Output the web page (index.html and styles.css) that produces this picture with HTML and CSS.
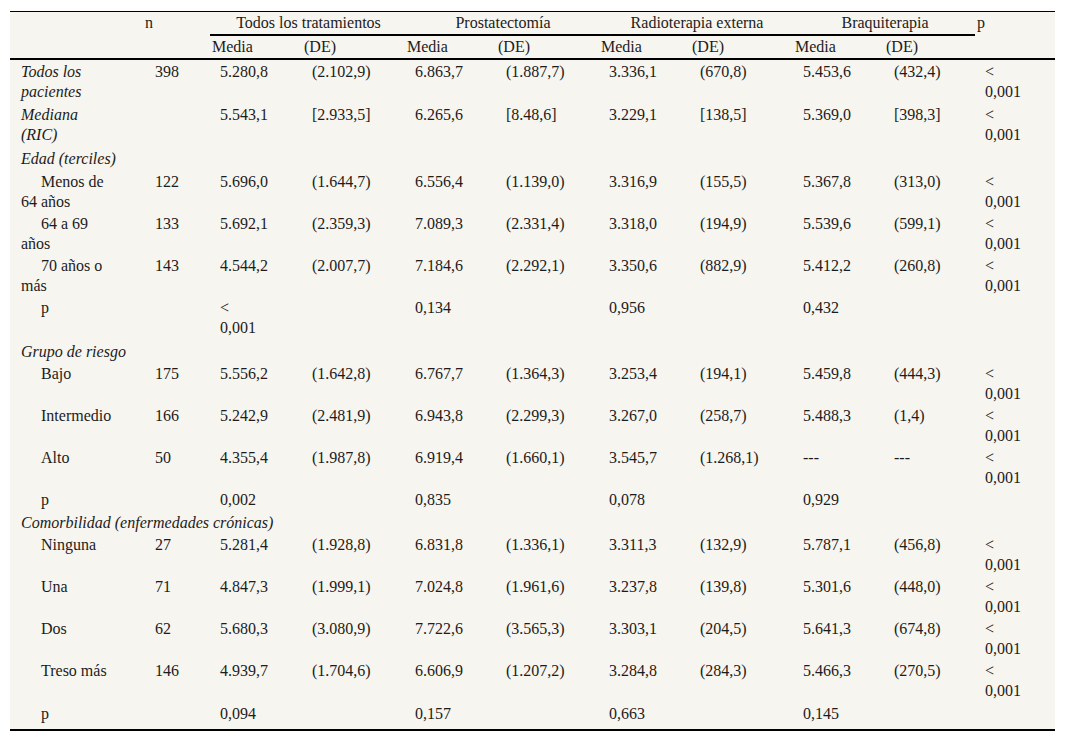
FILE: index.html
```html
<!DOCTYPE html>
<html lang="es">
<head>
<meta charset="utf-8">
<title>Tabla</title>
<link rel="stylesheet" href="styles.css">
</head>
<body>
<div class="sheet">
<table class="t">
<colgroup>
<col class="c-label"><col class="c-n"><col class="c-m1"><col class="c-de"><col class="c-m"><col class="c-de"><col class="c-m"><col class="c-de"><col class="c-m"><col class="c-de4"><col class="c-p">
</colgroup>
<thead>
<tr class="h1">
<th rowspan="2" class="hrs"></th>
<th rowspan="2" class="hrs">n</th>
<th colspan="2" class="hg">Todos los tratamientos</th>
<th colspan="2" class="hg">Prostatectomía</th>
<th colspan="2" class="hg">Radioterapia externa</th>
<th colspan="2" class="hg">Braquiterapia</th>
<th rowspan="2" class="hrs">p</th>
</tr>
<tr class="h2">
<th>Media</th><th>(DE)</th><th>Media</th><th>(DE)</th><th>Media</th><th>(DE)</th><th>Media</th><th>(DE)</th>
</tr>
</thead>
<tbody>
<tr class="x1"><td class="lab it">Todos los<br>pacientes</td><td class="num-n">398</td><td>5.280,8</td><td>(2.102,9)</td><td>6.863,7</td><td>(1.887,7)</td><td>3.336,1</td><td>(670,8)</td><td>5.453,6</td><td>(432,4)</td><td>&lt;<br>0,001</td></tr>
<tr class="x2"><td class="lab it">Mediana<br>(RIC)</td><td class="num-n"></td><td>5.543,1</td><td>[2.933,5]</td><td>6.265,6</td><td>[8.48,6]</td><td>3.229,1</td><td>[138,5]</td><td>5.369,0</td><td>[398,3]</td><td>&lt;<br>0,001</td></tr>
<tr class="x1"><td class="lab it" colspan="11">Edad (terciles)</td></tr>
<tr><td class="lab sub">Menos de<br>64 años</td><td class="num-n">122</td><td>5.696,0</td><td>(1.644,7)</td><td>6.556,4</td><td>(1.139,0)</td><td>3.316,9</td><td>(155,5)</td><td>5.367,8</td><td>(313,0)</td><td>&lt;<br>0,001</td></tr>
<tr><td class="lab sub">64 a 69<br>años</td><td class="num-n">133</td><td>5.692,1</td><td>(2.359,3)</td><td>7.089,3</td><td>(2.331,4)</td><td>3.318,0</td><td>(194,9)</td><td>5.539,6</td><td>(599,1)</td><td>&lt;<br>0,001</td></tr>
<tr><td class="lab sub">70 años o<br>más</td><td class="num-n">143</td><td>4.544,2</td><td>(2.007,7)</td><td>7.184,6</td><td>(2.292,1)</td><td>3.350,6</td><td>(882,9)</td><td>5.412,2</td><td>(260,8)</td><td>&lt;<br>0,001</td></tr>
<tr class="x2"><td class="lab sub">p</td><td class="num-n"></td><td>&lt;<br>0,001</td><td></td><td>0,134</td><td></td><td>0,956</td><td></td><td>0,432</td><td></td><td></td></tr>
<tr><td class="lab it" colspan="11">Grupo de riesgo</td></tr>
<tr><td class="lab sub">Bajo</td><td class="num-n">175</td><td>5.556,2</td><td>(1.642,8)</td><td>6.767,7</td><td>(1.364,3)</td><td>3.253,4</td><td>(194,1)</td><td>5.459,8</td><td>(444,3)</td><td>&lt;<br>0,001</td></tr>
<tr><td class="lab sub">Intermedio</td><td class="num-n">166</td><td>5.242,9</td><td>(2.481,9)</td><td>6.943,8</td><td>(2.299,3)</td><td>3.267,0</td><td>(258,7)</td><td>5.488,3</td><td>(1,4)</td><td>&lt;<br>0,001</td></tr>
<tr><td class="lab sub">Alto</td><td class="num-n">50</td><td>4.355,4</td><td>(1.987,8)</td><td>6.919,4</td><td>(1.660,1)</td><td>3.545,7</td><td>(1.268,1)</td><td>---</td><td>---</td><td>&lt;<br>0,001</td></tr>
<tr class="x1"><td class="lab sub">p</td><td class="num-n"></td><td>0,002</td><td></td><td>0,835</td><td></td><td>0,078</td><td></td><td>0,929</td><td></td><td></td></tr>
<tr><td class="lab it" colspan="11">Comorbilidad (enfermedades crónicas)</td></tr>
<tr><td class="lab sub">Ninguna</td><td class="num-n">27</td><td>5.281,4</td><td>(1.928,8)</td><td>6.831,8</td><td>(1.336,1)</td><td>3.311,3</td><td>(132,9)</td><td>5.787,1</td><td>(456,8)</td><td>&lt;<br>0,001</td></tr>
<tr><td class="lab sub">Una</td><td class="num-n">71</td><td>4.847,3</td><td>(1.999,1)</td><td>7.024,8</td><td>(1.961,6)</td><td>3.237,8</td><td>(139,8)</td><td>5.301,6</td><td>(448,0)</td><td>&lt;<br>0,001</td></tr>
<tr><td class="lab sub">Dos</td><td class="num-n">62</td><td>5.680,3</td><td>(3.080,9)</td><td>7.722,6</td><td>(3.565,3)</td><td>3.303,1</td><td>(204,5)</td><td>5.641,3</td><td>(674,8)</td><td>&lt;<br>0,001</td></tr>
<tr class="x1"><td class="lab sub">Treso más</td><td class="num-n">146</td><td>4.939,7</td><td>(1.704,6)</td><td>6.606,9</td><td>(1.207,2)</td><td>3.284,8</td><td>(284,3)</td><td>5.466,3</td><td>(270,5)</td><td>&lt;<br>0,001</td></tr>
<tr class="last"><td class="lab sub">p</td><td class="num-n"></td><td>0,094</td><td></td><td>0,157</td><td></td><td>0,663</td><td></td><td>0,145</td><td></td><td></td></tr>
</tbody>
</table>
</div>
</body>
</html>
```

FILE: styles.css
```css
html, body {
  margin: 0;
  padding: 0;
  background: #ffffff;
}

body {
  font-family: "Liberation Serif", "Times New Roman", serif;
  color: #1c1c1c;
}

.sheet {
  margin: 11px 11px 0 10px;
  width: 1045px;
  background: #f7f5ef;
}

.t {
  width: 1045px;
  table-layout: fixed;
  border-collapse: collapse;
  font-size: 16px;
  line-height: 20px;
  border-top: 1px solid #000;
  border-bottom: 2px solid #000;
}

.c-label { width: 133px; }
.c-n { width: 67px; }
.c-m1 { width: 92px; }
.c-de { width: 103px; }
.c-m { width: 91px; }
.c-de4 { width: 91px; }
.c-p { width: 80px; }

.t th,
.t td {
  text-align: left;
  vertical-align: top;
  font-weight: normal;
  white-space: nowrap;
  padding: 2px 0 0 10px;
}

.t thead th {
  padding: 1px 0 1px 2px;
  line-height: 20px;
}

.t thead .hg {
  text-align: center;
  border-bottom: 2px solid #000;
}

.t thead .h2 th,
.t thead .hrs {
  border-bottom: 2px solid #000;
}

.t td.lab {
  padding-left: 11px;
}

.t td.num-n {
  padding-left: 12px;
}

.t td.it {
  font-style: italic;
}

.t td.sub {
  text-indent: 20px;
}

.t tr.x1 td {
  padding-bottom: 1px;
}

.t tr.x2 td {
  padding-bottom: 2px;
}

.t tr.last td {
  padding-bottom: 5px;
}
```
